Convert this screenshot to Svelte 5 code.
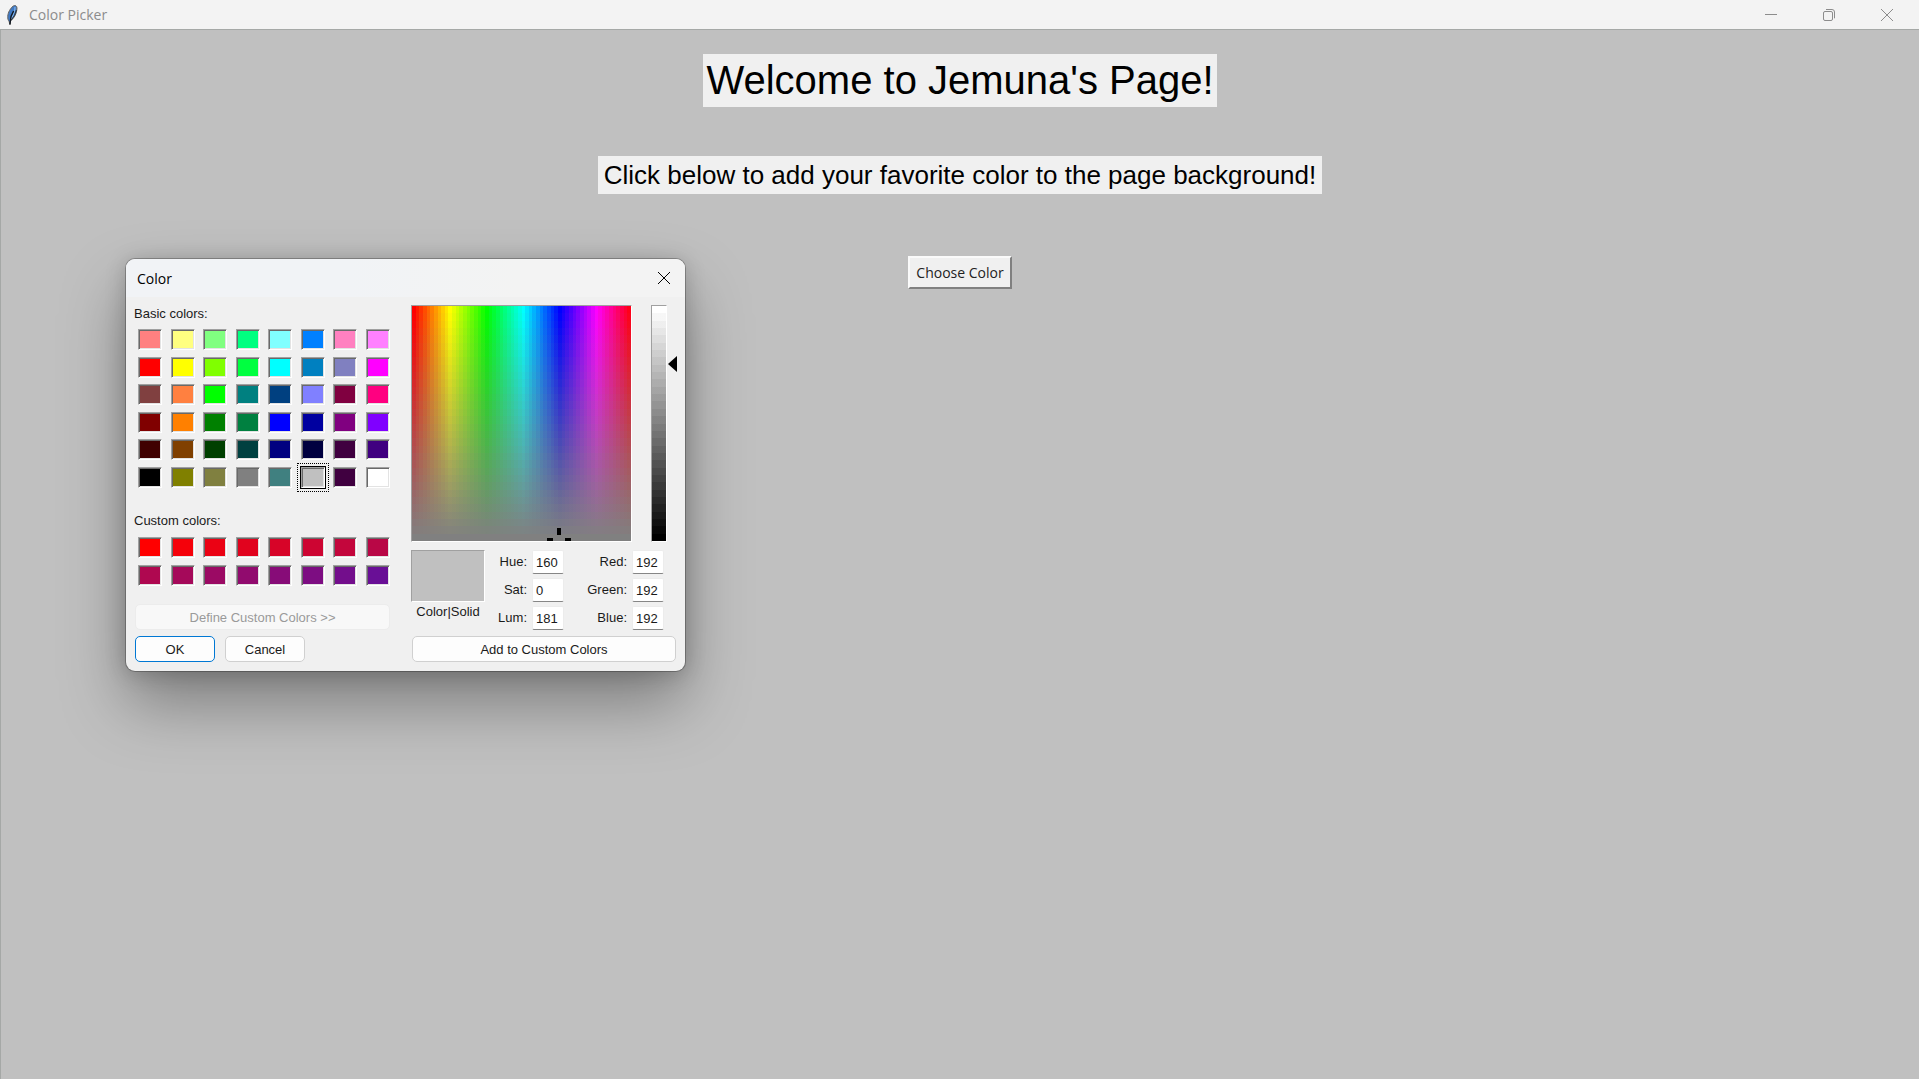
<script>
  const basic = [
    '#ff8080', '#ffff80', '#80ff80', '#00ff80', '#80ffff', '#0080ff', '#ff80c0', '#ff80ff',
    '#ff0000', '#ffff00', '#80ff00', '#00ff40', '#00ffff', '#0080c0', '#8080c0', '#ff00ff',
    '#804040', '#ff8040', '#00ff00', '#008080', '#004080', '#8080ff', '#800040', '#ff0080',
    '#800000', '#ff8000', '#008000', '#008040', '#0000ff', '#0000a0', '#800080', '#8000ff',
    '#400000', '#804000', '#004000', '#004040', '#000080', '#000040', '#400040', '#400080',
    '#000000', '#808000', '#808040', '#808080', '#408080', '#c0c0c0', '#400040', '#ffffff'
  ];
  const custom = Array.from({ length: 16 }, (_, i) => `rgb(${255 - i * 10}, ${i}, ${i * 10})`);

  let selected = $state(45);
  let fields = $state([
    { id: 'hue', label: 'Hue:', value: '160' },
    { id: 'red', label: 'Red:', value: '192' },
    { id: 'sat', label: 'Sat:', value: '0' },
    { id: 'green', label: 'Green:', value: '192' },
    { id: 'lum', label: 'Lum:', value: '181' },
    { id: 'blue', label: 'Blue:', value: '192' }
  ]);

  // Builds a gradient of n flat bands from a colour function.
  function bands(direction, n, colour) {
    const stops = Array.from(
      { length: n },
      (_, i) => `${colour(i)} ${(i * 100) / n}% ${((i + 1) * 100) / n}%`
    );
    return `linear-gradient(${direction}, ${stops.join(', ')})`;
  }

  const hues = bands('to right', 60, (i) => `hsl(${i * 6}, 100%, 50%)`);
  const greys = bands('to bottom', 32, (i) => `rgba(128, 128, 128, ${i / 31})`);
  const lums = bands('to bottom', 32, (i) => `hsl(0, 0%, ${100 - (i * 100) / 31}%)`);
</script>

<div class="window">
  <header class="titlebar">
    <svg class="feather" viewBox="0 0 12 20" aria-hidden="true">
      <path d="M8.5 .5 C10.5 .4 11.4 2 10.8 5 C10.3 9 8 13.5 4.5 16 L4 19.5 L3 16.3 C1 14 1.5 9 3.5 5.5 C5 3 6.5 1 8.5 .5Z" fill="#3f79c4" stroke="#66635f" stroke-width="1" />
      <path d="M9 2 C9.4 6 7 10 5.2 14" fill="none" stroke="#8fc0f2" stroke-width="1" />
      <path d="M7.6 6 L5 11.5 L3.9 19.5" fill="none" stroke="#111820" stroke-width="1.4" />
      <path d="M10.4 5 L8.5 10.5 L5.2 15" fill="none" stroke="#26323f" stroke-width="1" />
    </svg>
    <span class="app-name">Color Picker</span>
    <button class="ctl" aria-label="Minimize">
      <svg viewBox="0 0 12 12"><path d="M0 5.5H12" /></svg>
    </button>
    <button class="ctl" aria-label="Restore">
      <svg viewBox="0 0 12 12">
        <rect x=".5" y="2.5" width="9" height="9" rx="1.5" />
        <path d="M3 .5H9A2.5 2.5 0 0 1 11.5 3V9.3" />
      </svg>
    </button>
    <button class="ctl" aria-label="Close">
      <svg viewBox="0 0 12 12"><path d="M0 0L12 12M12 0L0 12" /></svg>
    </button>
  </header>

  <main class="page">
    <h1>Welcome to Jemuna's Page!</h1>
    <p class="intro">Click below to add your favorite color to the page background!</p>
    <button class="choose">Choose Color</button>
  </main>

  <div class="dialog" role="dialog" aria-labelledby="dialog-title">
    <div class="dialog-bar">
      <span id="dialog-title">Color</span>
      <button class="dialog-close" aria-label="Close dialog">
        <svg viewBox="0 0 12 12"><path d="M0 0L12 12M12 0L0 12" /></svg>
      </button>
    </div>

    <div class="dialog-body">
      <section class="left">
        <div class="group-label">Basic colors:</div>
        <div class="swatches basic">
          {#each basic as colour, i}
            <button
              class="swatch"
              class:selected={selected === i}
              style:background-color={colour}
              aria-label={colour}
              onclick={() => (selected = i)}
            ></button>
          {/each}
        </div>
        <div class="group-label second">Custom colors:</div>
        <div class="swatches custom">
          {#each custom as colour}
            <button class="swatch" style:background-color={colour} aria-label={colour}></button>
          {/each}
        </div>
        <button class="btn define" disabled>Define Custom Colors &gt;&gt;</button>
        <div class="actions">
          <button class="btn ok">OK</button>
          <button class="btn">Cancel</button>
        </div>
      </section>

      <section class="right">
        <div class="pickers">
          <div class="spectrum" style:background-image={`${greys}, ${hues}`}>
            <svg class="cross" viewBox="0 0 24 13" aria-hidden="true">
              <path d="M10 0h4v7h-4zM0 10h6v3h-6zM18 10h6v3h-6z" />
            </svg>
          </div>
          <div class="lum" style:background-image={lums}></div>
          <svg class="arrow" viewBox="0 0 9 16" aria-hidden="true"><path d="M0 8L9 0V16Z" /></svg>
        </div>
        <div class="details">
          <div class="sample">
            <div class="preview"></div>
            <span>Color|Solid</span>
          </div>
          <div class="fields">
            {#each fields as field}
              <label for={field.id}>{field.label}</label>
              <input id={field.id} type="text" bind:value={field.value} />
            {/each}
          </div>
        </div>
        <button class="btn add">Add to Custom Colors</button>
      </section>
    </div>
  </div>
</div>

<style>
  :global(body) {
    background: #c0c0c0;
  }

  .window {
    position: relative;
    display: flex;
    flex-direction: column;
    box-sizing: border-box;
    min-height: 100vh;
    background: #c0c0c0;
    font-family: 'Liberation Sans', Arial, sans-serif;
  }

  button {
    padding: 0;
    font-family: inherit;
  }

  .titlebar {
    display: flex;
    align-items: center;
    height: 29px;
    padding: 0 3px 0 6px;
    background: #f3f3f3;
    color: #8c8c8c;
  }

  .feather {
    width: 12px;
    height: 20px;
  }

  .app-name {
    flex: 1;
    margin-left: 11px;
    font: 14px 'Open Sans', sans-serif;
  }

  .ctl {
    width: 58px;
    height: 28px;
    border: 0;
    background: none;
  }

  .ctl svg,
  .dialog-close svg {
    display: block;
    width: 12px;
    height: 12px;
    margin: 0 auto;
    overflow: visible;
    fill: none;
    stroke: #8c8c8c;
  }

  .page {
    display: flex;
    flex: 1;
    flex-direction: column;
    align-items: center;
    padding-top: 24px;
    border-top: 1px solid #a5a8a6;
    border-left: 1px solid #a5a8a6;
  }

  h1,
  .intro {
    margin: 0;
    background: #f0f0f0;
    color: #000;
    font-weight: 400;
    white-space: nowrap;
  }

  h1 {
    padding: 0 3px;
    font-size: 40px;
    line-height: 53px;
  }

  .intro {
    margin-top: 49px;
    padding: 0 6px;
    font-size: 26px;
    line-height: 38px;
  }

  .choose {
    margin-top: 62px;
    height: 33px;
    padding: 0 6px;
    border: 2px solid;
    border-color: #fafafa #808080 #808080 #fafafa;
    background: #f0f0f0;
    color: #222;
    font: 14px 'Open Sans', sans-serif;
  }

  .dialog {
    position: absolute;
    top: 259px;
    left: 126px;
    border-radius: 9px;
    background: #f0f0f0;
    box-shadow:
      0 0 0 1px rgba(0, 0, 0, 0.25),
      0 2px 21px rgba(0, 0, 0, 0.2),
      0 32px 64px rgba(0, 0, 0, 0.35);
    color: #1a1a1a;
    font-size: 13px;
  }

  .dialog-bar {
    display: flex;
    align-items: center;
    justify-content: space-between;
    height: 38px;
    padding: 0 15px 0 11px;
    border-radius: 9px 9px 0 0;
    background: linear-gradient(to right, #f1f3f6 40%, #f3f3f3 70%);
    color: #000;
    font: 14px 'Open Sans', sans-serif;
  }

  .dialog-close {
    border: 0;
    background: none;
  }

  .dialog-close svg {
    stroke: #000;
  }

  .dialog-body {
    display: grid;
    grid-template-columns: 256px 265px;
    gap: 21px;
    padding: 8px 9px 9px 8px;
  }

  .left,
  .right {
    display: flex;
    flex-direction: column;
  }

  .group-label {
    margin: 1px 0 7px;
    line-height: 16px;
  }

  .group-label.second {
    margin: 25px 0 8px;
  }

  .swatches {
    display: grid;
    grid-template-columns: repeat(8, 24px);
    justify-content: space-between;
    align-content: space-between;
    margin-left: 4px;
  }

  .basic {
    height: 159px;
  }

  .custom {
    height: 49px;
  }

  .swatch {
    width: 24px;
    height: 21px;
    border: 1px solid;
    border-color: #a0a0a0 #fff #fff #a0a0a0;
    border-radius: 0;
    box-shadow:
      inset 1px 1px #696969,
      inset -1px -1px #e3e3e3;
  }

  .swatch.selected {
    box-shadow:
      0 0 0 1px #000,
      inset 1px 1px #696969,
      inset -1px -1px #e3e3e3;
    outline: 1px dotted #000;
    outline-offset: 3px;
  }

  .btn {
    height: 26px;
    border: 1px solid #d0d0d0;
    border-radius: 5px;
    background: #fdfdfd;
    color: #1a1a1a;
    font-size: 13px;
  }

  .define {
    margin: 18px 0 6px 1px;
    border-color: #ececec;
    background: #f8f8f8;
    color: #9a9a9a;
  }

  .actions {
    display: grid;
    grid-template-columns: 80px 80px;
    gap: 10px;
    margin-left: 1px;
  }

  .ok {
    border-color: #0078d4;
  }

  .pickers {
    display: grid;
    grid-template-columns: 221px 34px 9px;
    column-gap: 1px;
    height: 237px;
  }

  .spectrum,
  .lum {
    position: relative;
    border: 1px solid;
    border-color: #a0a0a0 #fff #fff #a0a0a0;
    background-origin: padding-box;
    background-repeat: no-repeat;
  }

  .lum {
    margin-left: 18px;
  }

  .cross {
    position: absolute;
    bottom: 0;
    left: 135px;
    width: 24px;
    height: 13px;
  }

  .arrow {
    width: 9px;
    height: 16px;
    margin-top: 51px;
  }

  .details {
    display: grid;
    grid-template-columns: 74px 179px;
    margin-top: 8px;
  }

  .sample {
    display: flex;
    flex-direction: column;
    align-items: center;
    line-height: 20px;
  }

  .preview {
    box-sizing: border-box;
    width: 100%;
    height: 52px;
    border: 1px solid;
    border-color: #a0a0a0 #fff #fff #a0a0a0;
    background: #c0c0c0;
  }

  .fields {
    display: grid;
    grid-template-columns: 42px 32px 58px 32px;
    grid-auto-rows: 24px;
    column-gap: 5px;
    row-gap: 4px;
    line-height: 24px;
    text-align: right;
    white-space: nowrap;
  }

  input {
    box-sizing: border-box;
    width: 100%;
    height: 24px;
    padding: 0 0 0 3px;
    border: 1px solid #ececec;
    border-bottom-color: #868686;
    border-radius: 2px;
    background: #fff;
    color: #1a1a1a;
    font: 13px 'Liberation Sans', Arial, sans-serif;
  }

  .add {
    margin: 6px 0 0 1px;
  }
</style>
